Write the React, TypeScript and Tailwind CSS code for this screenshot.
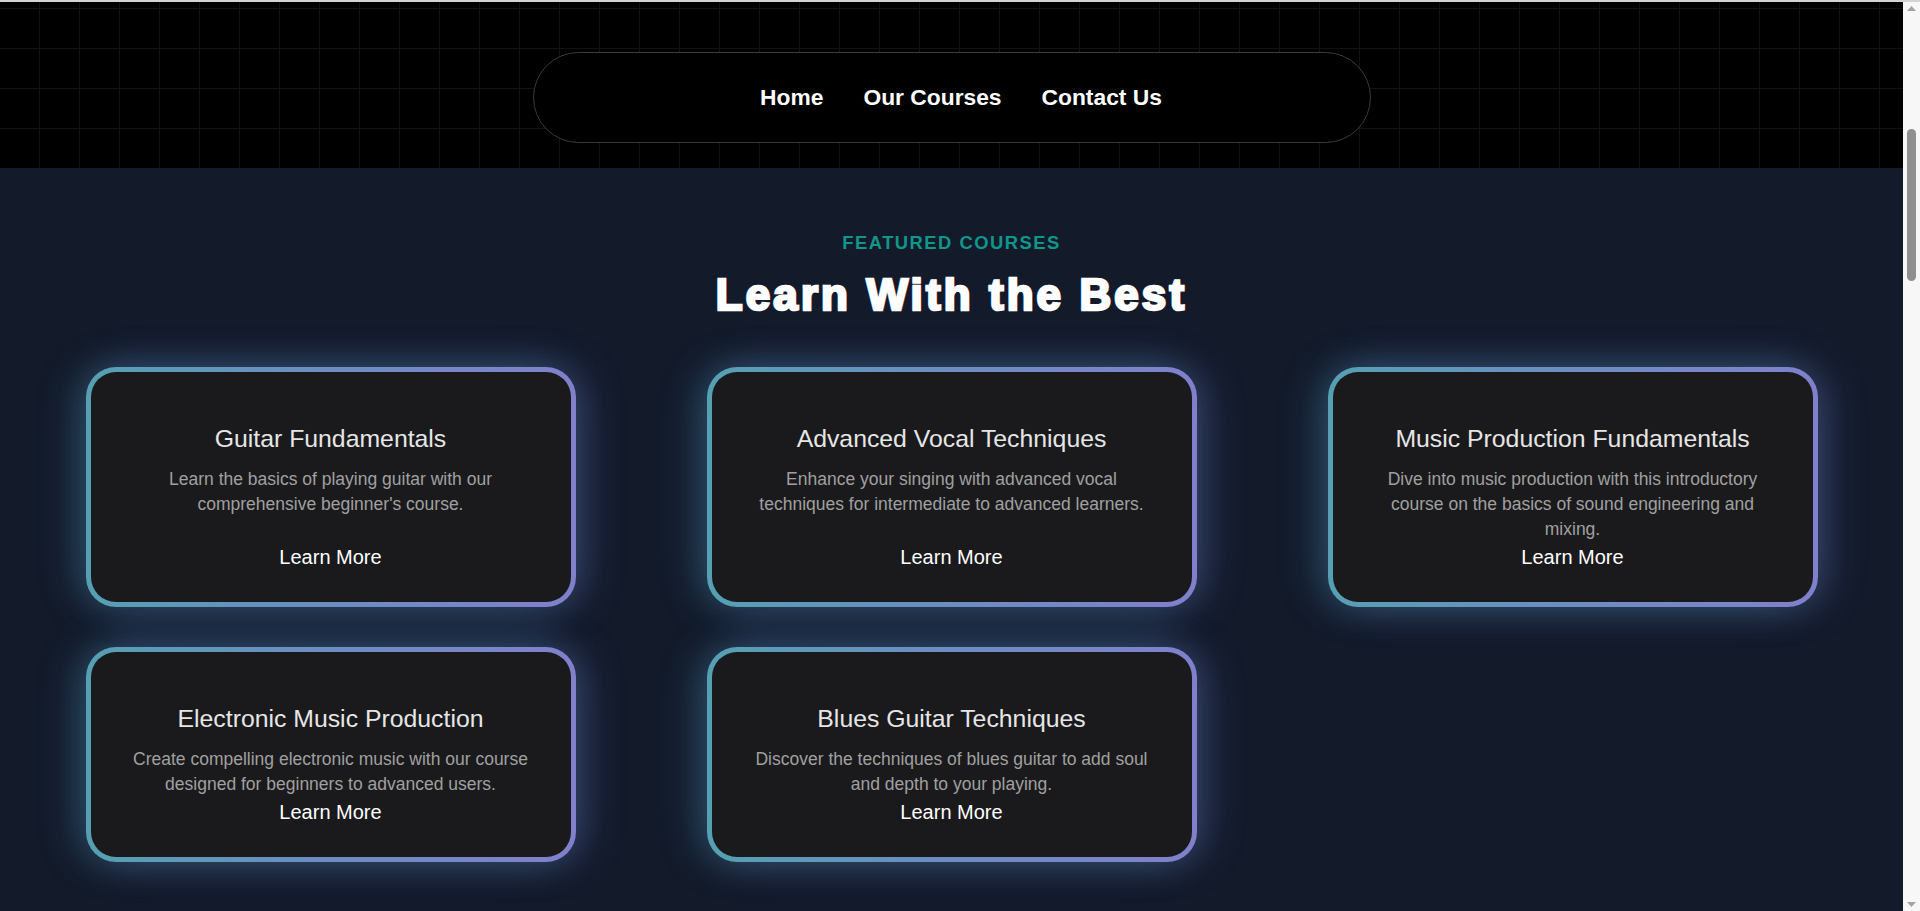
import React from 'react';

type Course = {
  title: string;
  text: string;
};

const courses: Course[] = [
  {
    title: 'Guitar Fundamentals',
    text: "Learn the basics of playing guitar with our comprehensive beginner's course.",
  },
  {
    title: 'Advanced Vocal Techniques',
    text: 'Enhance your singing with advanced vocal techniques for intermediate to advanced learners.',
  },
  {
    title: 'Music Production Fundamentals',
    text: 'Dive into music production with this introductory course on the basics of sound engineering and mixing.',
  },
  {
    title: 'Electronic Music Production',
    text: 'Create compelling electronic music with our course designed for beginners to advanced users.',
  },
  {
    title: 'Blues Guitar Techniques',
    text: 'Discover the techniques of blues guitar to add soul and depth to your playing.',
  },
];

function CourseCard({ course }: { course: Course }) {
  return (
    <div className="flex w-[490px] rounded-[30px] bg-[linear-gradient(to_right,#55a0b3,#6d8dc2,#8080cc)] p-[5px] shadow-[-10px_0_42px_-2px_rgba(70,160,185,0.33),10px_0_42px_-2px_rgba(120,120,215,0.33)]">
      <div className="flex flex-1 flex-col items-center rounded-[25px] bg-[#1a1a1c] px-8 pt-[51px] pb-[31px] text-center">
        {/* Title */}
        <h3 className="mb-3 text-[24.8px] leading-8 text-[#e6e6e6]">{course.title}</h3>
        {/* Description */}
        <p className="text-[17.5px] leading-[25px] text-[#a0a0a0]">{course.text}</p>
        {/* CTA */}
        <a href="#" className="mt-auto pt-px text-xl leading-7 text-white">
          Learn More
        </a>
      </div>
    </div>
  );
}

// browser scrollbar as seen in the shot
function ScrollStrip() {
  return (
    <aside className="flex w-[17px] flex-col items-center bg-[#f7f7f7]">
      <svg className="mt-[4px] h-[5px] w-[9px]" viewBox="0 0 9 5">
        <polygon points="4.5,0 9,5 0,5" fill="#a3a3a3" />
      </svg>
      <div className="mt-[118px] h-[152px] w-[9px] rounded-full bg-[#8f8f8f]" />
      <div className="flex-1" />
      <svg className="mb-[4px] h-[5px] w-[9px]" viewBox="0 0 9 5">
        <polygon points="0,0 9,0 4.5,5" fill="#a3a3a3" />
      </svg>
    </aside>
  );
}

export default function App() {
  return (
    <div className="flex h-screen flex-col overflow-hidden font-['Liberation_Sans',Arial,sans-serif]">
      {/* top edge line */}
      <div className="h-[2px] shrink-0 bg-[#d4d4d4]" />

      <div className="flex min-h-0 flex-1">
        <main className="min-w-0 flex-1 overflow-hidden bg-[#131a2a]">
          {/* Header with grid pattern */}
          <header className="h-[166px] bg-black bg-[linear-gradient(to_right,#121212_1px,transparent_1px),linear-gradient(to_bottom,#121212_1px,transparent_1px)] bg-[size:40px_40px] bg-[position:39px_6px] pt-[50px]">
            <nav className="mx-auto flex h-[91px] w-[838px] items-center justify-center gap-10 rounded-full border border-[#3a3a3a] bg-black pl-[19px] text-[22.8px] leading-[1.5] font-bold text-white">
              <a href="#">Home</a>
              <a href="#">Our Courses</a>
              <a href="#">Contact Us</a>
            </nav>
          </header>

          {/* Featured courses */}
          <section className="pt-[61px]">
            <p className="text-center text-[18.4px] leading-7 font-bold tracking-[0.08em] text-[#10968a] uppercase">
              Featured Courses
            </p>
            <h2 className="mt-4 text-center text-[44px] leading-[44px] font-bold tracking-[0.07em] text-white [-webkit-text-stroke:2.5px_#fff] [text-shadow:1.5px_0_rgba(200,0,20,0.7),-1.5px_0_rgba(0,190,255,0.7)]">
              Learn With the Best
            </h2>

            <div className="mt-[50px] grid grid-cols-3 justify-items-center gap-x-10 gap-y-10 px-10">
              {courses.map((course) => (
                <CourseCard key={course.title} course={course} />
              ))}
            </div>
          </section>
        </main>

        <ScrollStrip />
      </div>
    </div>
  );
}
